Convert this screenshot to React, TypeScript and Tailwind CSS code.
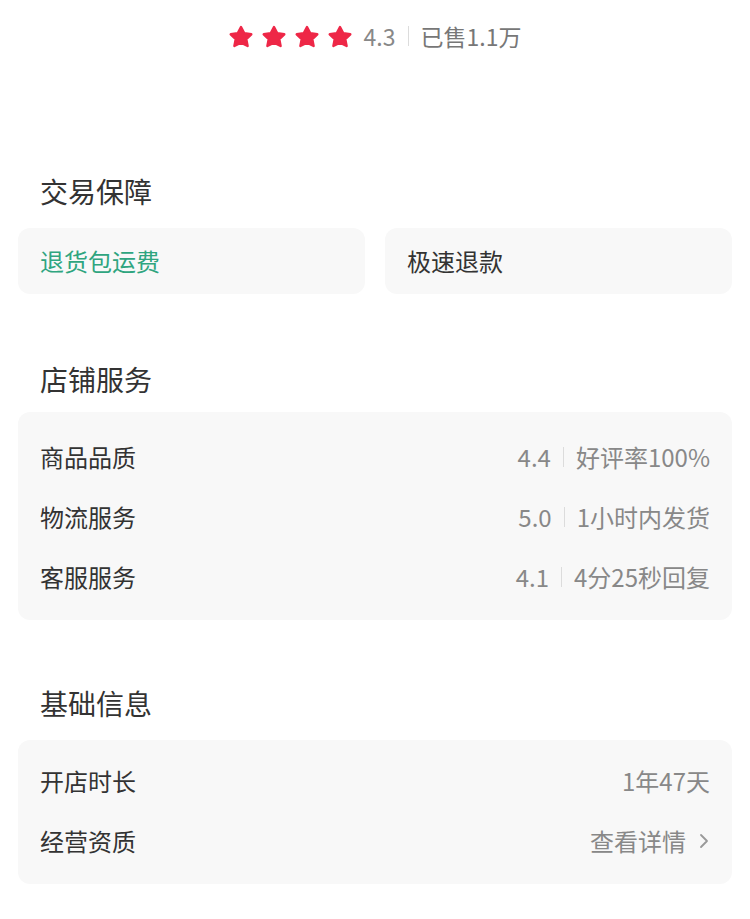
const FONT = { fontFamily: '"Noto Sans CJK SC", "Noto Sans", sans-serif' };

function Star() {
  return (
    <svg width="24" height="23" viewBox="0 0 24 23">
      <path
        d="M12 2l3.3 6.3 7 1-5 4.8 1.3 6.9L12 17.7l-6.6 3.3 1.3-6.9-5-4.8 7-1z"
        fill="#ee2747"
        stroke="#ee2747"
        strokeWidth="2.4"
        strokeLinejoin="round"
      />
    </svg>
  );
}

function Divider() {
  return <span className="mx-[12px] inline-block h-[20px] w-px bg-[#dcdcdc]" />;
}

function Heading({ children }: { children: React.ReactNode }) {
  return <h2 className="px-[40px] text-[28px] leading-[40px] text-[#333]">{children}</h2>;
}

const services = [
  { label: "商品品质", score: "4.4", note: "好评率100%" },
  { label: "物流服务", score: "5.0", note: "1小时内发货" },
  { label: "客服服务", score: "4.1", note: "4分25秒回复" },
];

export default function App() {
  return (
    <div className="min-h-[919px] w-[750px] bg-white" style={FONT}>
      <div className="box-content flex h-[40px] items-center justify-center pt-[16px]">
        <div className="flex items-center gap-[9px]">
          <Star />
          <Star />
          <Star />
          <Star />
        </div>
        <span className="ml-[12px] text-[23px] text-[#888]">4.3</span>
        <Divider />
        <span className="text-[23px] text-[#777]">已售1.1万</span>
      </div>

      <div className="pt-[115px]">
        <Heading>交易保障</Heading>
        <div className="mt-[17px] grid grid-cols-2 gap-[20px] px-[18px]">
          <div className="flex h-[66px] items-center rounded-[12px] bg-[#f8f8f8] px-[22px] text-[24px] text-[#2fa57f]">
            退货包运费
          </div>
          <div className="flex h-[66px] items-center rounded-[12px] bg-[#f8f8f8] px-[22px] text-[24px] text-[#333]">
            极速退款
          </div>
        </div>
      </div>

      <div className="pt-[65px]">
        <Heading>店铺服务</Heading>
        <div className="mx-[18px] mt-[13px] rounded-[12px] bg-[#f8f8f8] px-[22px] pb-[13px] pt-[15px]">
          {services.map((s) => (
            <div key={s.label} className="flex h-[60px] items-center justify-between text-[24px]">
              <span className="text-[#333]">{s.label}</span>
              <span className="flex items-center text-[#888]">
                <span>{s.score}</span>
                <Divider />
                <span>{s.note}</span>
              </span>
            </div>
          ))}
        </div>
      </div>

      <div className="pt-[63px]">
        <Heading>基础信息</Heading>
        <div className="mx-[18px] mt-[17px] rounded-[12px] bg-[#f8f8f8] px-[22px] pb-[13px] pt-[11px]">
          <div className="flex h-[60px] items-center justify-between text-[24px]">
            <span className="text-[#333]">开店时长</span>
            <span className="text-[#888]">1年47天</span>
          </div>
          <div className="flex h-[60px] items-center justify-between text-[24px]">
            <span className="text-[#333]">经营资质</span>
            <span className="flex items-center text-[#888]">
              查看详情
              <svg className="ml-[12px]" width="12" height="20" viewBox="0 0 12 20" fill="none">
                <path d="M3 4l6 6-6 6" stroke="#999" strokeWidth="1.8" strokeLinecap="round" strokeLinejoin="round" />
              </svg>
            </span>
          </div>
        </div>
      </div>
    </div>
  );
}
